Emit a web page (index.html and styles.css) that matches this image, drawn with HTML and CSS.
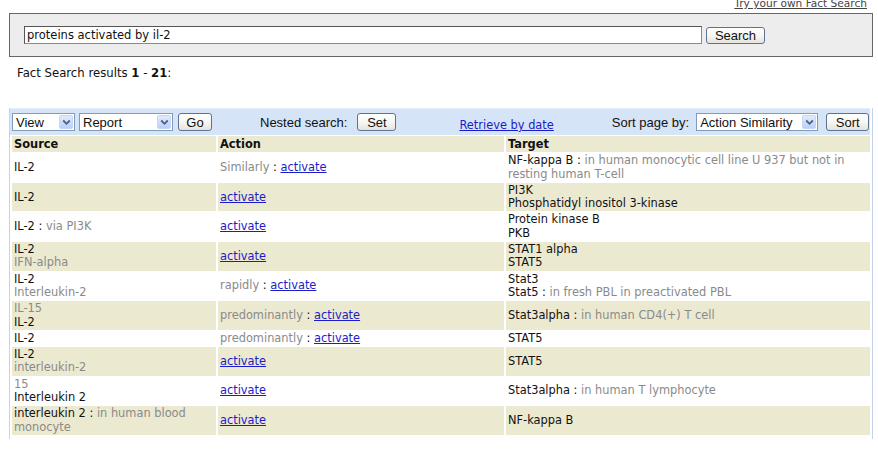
FILE: index.html
```html
<!DOCTYPE html>
<html>
<head>
<meta charset="utf-8">
<title>Fact Search</title>
<link rel="stylesheet" href="styles.css">
</head>
<body>
<div class="toplink"><a href="#">Try your own Fact Search</a></div>
<div class="searchbox">
  <div class="input">proteins activated by il-2</div>
  <button class="btn btn-search">Search</button>
</div>
<div class="results">Fact Search results <b>1</b> - <b>21</b>:</div>
<div class="panel">
  <div class="toolbar">
    <div class="select sel-view"><span class="label">View</span><span class="arrow"><svg width="9" height="7" viewBox="0 0 9 7"><path d="M1.2 1.5 L4.5 4.8 L7.8 1.5" fill="none" stroke="#4d6185" stroke-width="1.8"/></svg></span></div>
    <div class="select sel-report"><span class="label">Report</span><span class="arrow"><svg width="9" height="7" viewBox="0 0 9 7"><path d="M1.2 1.5 L4.5 4.8 L7.8 1.5" fill="none" stroke="#4d6185" stroke-width="1.8"/></svg></span></div>
    <button class="btn btn-go">Go</button>
    <span class="tlabel nested">Nested search:</span>
    <button class="btn btn-set">Set</button>
    <a class="retrieve" href="#">Retrieve by date</a>
    <span class="tlabel sortby">Sort page by:</span>
    <div class="select sel-sort"><span class="label">Action Similarity</span><span class="arrow"><svg width="9" height="7" viewBox="0 0 9 7"><path d="M1.2 1.5 L4.5 4.8 L7.8 1.5" fill="none" stroke="#4d6185" stroke-width="1.8"/></svg></span></div>
    <button class="btn btn-sort">Sort</button>
  </div>
  <table class="facts">
    <colgroup><col class="c-src"><col class="c-act"><col class="c-tgt"></colgroup>
    <thead>
      <tr><th>Source</th><th>Action</th><th>Target</th></tr>
    </thead>
    <tbody>
      <tr>
        <td>IL-2</td>
        <td><span class="g">Similarly</span> : <a href="#">activate</a></td>
        <td>NF-kappa B : <span class="g">in human monocytic cell line U 937 but not in<br>resting human T-cell</span></td>
      </tr>
      <tr class="alt">
        <td>IL-2</td>
        <td><a href="#">activate</a></td>
        <td>PI3K<br>Phosphatidyl inositol 3-kinase</td>
      </tr>
      <tr>
        <td>IL-2 : <span class="g">via PI3K</span></td>
        <td><a href="#">activate</a></td>
        <td>Protein kinase B<br>PKB</td>
      </tr>
      <tr class="alt">
        <td>IL-2<br><span class="g">IFN-alpha</span></td>
        <td><a href="#">activate</a></td>
        <td>STAT1 alpha<br>STAT5</td>
      </tr>
      <tr>
        <td>IL-2<br><span class="g">Interleukin-2</span></td>
        <td><span class="g">rapidly</span> : <a href="#">activate</a></td>
        <td>Stat3<br>Stat5 : <span class="g">in fresh PBL in preactivated PBL</span></td>
      </tr>
      <tr class="alt">
        <td><span class="g">IL-15</span><br>IL-2</td>
        <td><span class="g">predominantly</span> : <a href="#">activate</a></td>
        <td>Stat3alpha : <span class="g">in human CD4(+) T cell</span></td>
      </tr>
      <tr>
        <td>IL-2</td>
        <td><span class="g">predominantly</span> : <a href="#">activate</a></td>
        <td>STAT5</td>
      </tr>
      <tr class="alt">
        <td>IL-2<br><span class="g">interleukin-2</span></td>
        <td><a href="#">activate</a></td>
        <td>STAT5</td>
      </tr>
      <tr>
        <td><span class="g">15</span><br>Interleukin 2</td>
        <td><a href="#">activate</a></td>
        <td>Stat3alpha : <span class="g">in human T lymphocyte</span></td>
      </tr>
      <tr class="alt">
        <td>interleukin 2 : <span class="g">in human blood<br>monocyte</span></td>
        <td><a href="#">activate</a></td>
        <td>NF-kappa B</td>
      </tr>
    </tbody>
  </table>
</div>
</body>
</html>
```
FILE: styles.css
```css
html, body {
  margin: 0;
  padding: 0;
  background: #fff;
}
body {
  font-family: "DejaVu Sans", Verdana, sans-serif;
  font-size: 11px;
  color: #111;
  width: 878px;
  overflow: hidden;
}
a {
  color: #1c1cc8;
  text-decoration: underline;
}

.toplink {
  margin-top: -3px;
  height: 12px;
  line-height: 12px;
  text-align: right;
  padding-right: 11px;
}
.toplink a {
  color: #444;
  font-size: 10.6px;
}

.searchbox {
  margin: 4px 5px 0 9px;
  border: 1px solid #666;
  background: #ededed;
  display: flex;
  align-items: flex-end;
  padding: 12px 0 12px 14px;
}
.input {
  box-sizing: border-box;
  width: 678px;
  height: 18px;
  background: #fff;
  border: 1px solid #8a8a8a;
  border-top-color: #555;
  border-left-color: #555;
  padding-left: 2px;
  line-height: 16px;
  font-size: 11.5px;
  color: #111;
}

.btn {
  box-sizing: border-box;
  font-family: "Liberation Sans", Arial, sans-serif;
  font-size: 13px;
  color: #111;
  height: 18px;
  padding: 0;
  border: 1px solid #5f7390;
  border-radius: 3px;
  background: linear-gradient(#ffffff, #f5f5f1 55%, #e4e3dc);
  line-height: 15px;
  text-align: center;
}
.btn-search {
  width: 59px;
  height: 17px;
  margin-left: 4px;
}

.results {
  margin-top: 9px;
  padding-left: 17px;
  font-size: 11.7px;
  line-height: 14px;
}

.panel {
  margin: 28px 0 0 9px;
  width: 864px;
  box-sizing: border-box;
  border-left: 1px solid #c3d3ee;
  border-right: 1px solid #c3d3ee;
  padding-bottom: 3px;
}
.toolbar {
  height: 27px;
  margin-right: 2px;
  background: #d6e4f7;
  border-top: 1px solid #e6eefb;
  box-sizing: border-box;
  display: flex;
  align-items: center;
  padding-left: 2px;
}
.select {
  box-sizing: border-box;
  height: 18px;
  border: 1px solid #7f9db9;
  background: #fff;
  display: flex;
  align-items: center;
  font-family: "Liberation Sans", Arial, sans-serif;
  font-size: 13px;
  color: #111;
}
.select .label {
  flex: 1;
  padding-left: 3px;
  white-space: nowrap;
  overflow: hidden;
}
.select .arrow {
  box-sizing: border-box;
  width: 14px;
  height: 14px;
  margin-right: 1px;
  border: 1px solid #c6d6f6;
  border-radius: 2px;
  background: linear-gradient(#e2ebfd, #bccff5);
  display: flex;
  align-items: center;
  justify-content: center;
}
.sel-view { width: 63px; }
.sel-report { width: 94px; margin-left: 4px; }
.btn-go { width: 34px; margin-left: 5px; }
.tlabel {
  font-family: "Liberation Sans", Arial, sans-serif;
  font-size: 13px;
  color: #111;
  white-space: nowrap;
}
.nested { margin-left: 48px; }
.btn-set { width: 39px; margin-left: 10px; }
.retrieve {
  align-self: flex-end;
  margin-bottom: 3px;
  margin-left: 63px;
  font-size: 11.4px;
  line-height: 13px;
  white-space: nowrap;
}
.sortby { margin-left: 58px; }
.sel-sort { width: 122px; margin-left: 7px; }
.btn-sort { width: 43px; margin-left: 8px; }

.facts {
  width: 862px;
  border-collapse: separate;
  border-spacing: 2px 1px;
  margin-top: 0;
  table-layout: fixed;
}
.c-src { width: 204px; }
.c-act { width: 286px; }
.c-tgt { width: 364px; }
.facts th, .facts td {
  padding: 1px 2px 1px 2px;
  line-height: 13.3px;
  text-align: left;
  vertical-align: middle;
  font-size: 11.4px;
}
.facts th {
  background: #ece9d1;
  font-weight: bold;
  padding-top: 2px;
}
.facts tr.alt td {
  background: #ece9d1;
}
.g {
  color: #8a8a8a;
}
```
